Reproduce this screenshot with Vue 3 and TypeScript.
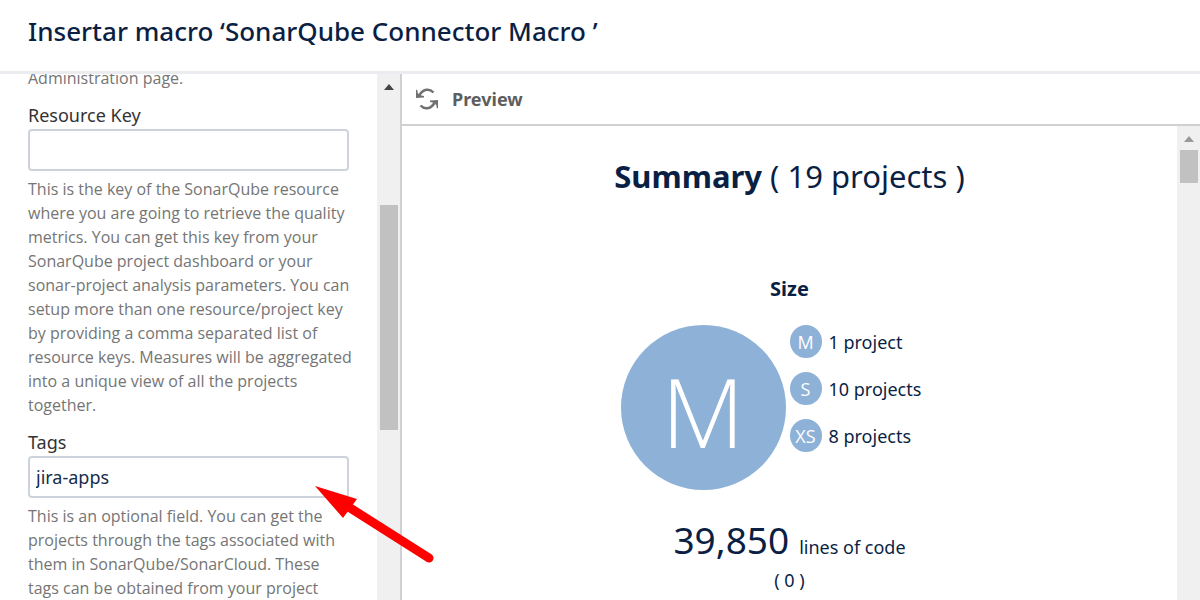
<script setup lang="ts">
import { ref } from 'vue'

interface SizeRow {
  label: string
  text: string
}

const resourceKey = ref('')
const tags = ref('jira-apps')

const resourceHelp: string[] = [
  'This is the key of the SonarQube resource',
  'where you are going to retrieve the quality',
  'metrics. You can get this key from your',
  'SonarQube project dashboard or your',
  'sonar-project analysis parameters. You can',
  'setup more than one resource/project key',
  'by providing a comma separated list of',
  'resource keys. Measures will be aggregated',
  'into a unique view of all the projects',
  'together.',
]

const tagsHelp: string[] = [
  'This is an optional field. You can get the',
  'projects through the tags associated with',
  'them in SonarQube/SonarCloud. These',
  'tags can be obtained from your project',
]

const sizes: SizeRow[] = [
  { label: 'M', text: '1 project' },
  { label: 'S', text: '10 projects' },
  { label: 'XS', text: '8 projects' },
]
</script>

<template>
  <div class="dialog">
    <header class="title-bar">
      <h1>Insertar macro ‘SonarQube Connector Macro ’</h1>
    </header>

    <div class="body">
      <aside class="params">
        <form class="fields" @submit.prevent>
          <p class="help previous">Administration page.</p>

          <div class="field">
            <label for="resource-key">Resource Key</label>
            <input id="resource-key" v-model="resourceKey" type="text" aria-describedby="resource-help" />
            <p id="resource-help" class="help">
              <span v-for="line in resourceHelp" :key="line">{{ line }}</span>
            </p>
          </div>

          <div class="field">
            <label for="tags">Tags</label>
            <input id="tags" v-model="tags" type="text" aria-describedby="tags-help" />
            <p id="tags-help" class="help">
              <span v-for="line in tagsHelp" :key="line">{{ line }}</span>
            </p>
          </div>
        </form>
        <div class="scrollbar" aria-hidden="true">
          <svg class="up" viewBox="0 0 10 6"><path d="M0 6 5 0l5 6z" /></svg>
          <div class="thumb params-thumb"></div>
        </div>
      </aside>

      <main class="preview">
        <div class="toolbar">
          <button type="button" class="refresh">
            <svg viewBox="0 0 22 22" aria-hidden="true">
              <g id="half">
                <path class="arc" d="M17.5 4.500C13.500.300 7.500.500 3.500 7" />
                <path class="head" d="M0 1.500 1.500 2.500V4.500L3 6.500 5.500 7.500 8 8V9.500L0 10z" />
              </g>
              <use href="#half" transform="rotate(180 11 11)" />
            </svg>
            <span>Preview</span>
          </button>
        </div>

        <div class="viewport">
          <section class="report">
            <h2><b>Summary</b> ( 19 projects )</h2>
            <h3>Size</h3>
            <div class="size">
              <div class="rating">M</div>
              <ul>
                <li v-for="row in sizes" :key="row.label">
                  <span class="badge">{{ row.label }}</span>
                  <span>{{ row.text }}</span>
                </li>
              </ul>
            </div>
            <p class="loc"><span class="count">39,850</span><span>lines of code</span></p>
            <p class="delta">( 0 )</p>
          </section>
          <div class="scrollbar light" aria-hidden="true">
            <svg class="up" viewBox="0 0 10 6"><path d="M0 6 5 0l5 6z" /></svg>
            <div class="thumb preview-thumb"></div>
          </div>
        </div>
      </main>
    </div>

    <svg class="pointer" viewBox="0 0 120 80" aria-hidden="true">
      <path d="M0 0 42 13 28 32z" />
      <line x1="32" y1="20" x2="114" y2="72" />
    </svg>
  </div>
</template>

<style>
body {
  margin: 0;
}
</style>

<style scoped>
.dialog {
  position: relative;
  display: flex;
  flex-direction: column;
  height: 100vh;
  overflow: hidden;
  background: #fff;
  color: #0b1f44;
  font-family: "Noto Sans", "Open Sans", sans-serif;
  font-size: 18px;
}

h1, h2, h3, p, ul {
  margin: 0;
  padding: 0;
  font-weight: 400;
}

.title-bar {
  flex: none;
  padding: 11px 28px 20px;
  border-bottom: 3px solid #ebecf0;
  white-space: nowrap;
}

h1 {
  font-size: 26px;
  line-height: 40px;
  font-weight: 500;
}

.body {
  display: flex;
  flex: 1;
  min-height: 0;
}

.params {
  display: flex;
  justify-content: space-between;
  flex: 0 0 400px;
  overflow: hidden;
  border-right: 2px solid #d0d0d2;
}

.fields {
  display: flex;
  flex-direction: column;
  gap: 12px;
  flex: 1;
  min-width: 0;
  margin-top: -8px;
  padding: 0 28px;
  white-space: nowrap;
}

.field {
  display: flex;
  flex-direction: column;
}

label {
  color: #333;
  line-height: 27px;
}

input {
  box-sizing: border-box;
  width: 100%;
  height: 42px;
  margin-bottom: 6px;
  padding: 0 6px;
  border: 2px solid #cdd2dd;
  border-radius: 4px;
  background: #fff;
  color: #172b4d;
  font: inherit;
  outline: 0;
}

.help {
  color: #757575;
  font-family: "Open Sans", sans-serif;
  font-size: 16px;
  line-height: 24px;
}

.help span {
  display: block;
}

.scrollbar {
  display: flex;
  flex-direction: column;
  align-items: center;
  flex: 0 0 23px;
  background: #f0f0f0;
}

.up {
  width: 10px;
  height: 6px;
  margin-top: 10px;
  fill: #444;
}

.thumb {
  width: 18px;
  background: #c1c1c1;
}

.params-thumb {
  height: 225px;
  margin-top: 115px;
}

.preview {
  display: flex;
  flex-direction: column;
  flex: 1;
  min-width: 0;
}

.toolbar {
  padding: 10px 14px;
  border-bottom: 2px solid #d0d0d0;
}

.refresh {
  display: flex;
  align-items: center;
  gap: 14px;
  padding: 0;
  border: 0;
  background: none;
  color: #5e5e5e;
  font: inherit;
  font-weight: 700;
  line-height: 30px;
}

.refresh svg {
  width: 22px;
  height: 22px;
  fill: #707070;
}

.arc {
  fill: none;
  stroke: #707070;
  stroke-width: 2.5;
}

.viewport {
  display: flex;
  flex: 1;
  min-height: 0;
}

.report {
  display: flex;
  flex-direction: column;
  align-items: center;
  flex: 1;
  white-space: nowrap;
}

.light .up {
  fill: #999;
}

.preview-thumb {
  height: 33px;
  margin-top: 8px;
}

h2 {
  margin-top: 26px;
  font-size: 31px;
  line-height: 48px;
}

h3 {
  margin-top: 77px;
  font-size: 20px;
  line-height: 24px;
  font-weight: 700;
}

.size {
  display: flex;
  gap: 4px;
  margin-top: 24px;
}

.rating,
.badge {
  display: flex;
  align-items: center;
  justify-content: center;
  box-sizing: border-box;
  border-radius: 50%;
  background: #8eb1d7;
  color: #fff;
  font-family: "Open Sans", sans-serif;
}

.rating {
  width: 165px;
  height: 165px;
  padding-top: 6px;
  font-size: 96px;
  font-weight: 300;
}

ul {
  width: 169px;
  list-style: none;
}

li {
  display: flex;
  align-items: center;
  gap: 7px;
  height: 33px;
  margin-bottom: 14px;
}

.badge {
  width: 32px;
  height: 33px;
}

.loc {
  display: flex;
  align-items: baseline;
  gap: 10px;
  margin-top: 30px;
  line-height: 40px;
}

.count {
  font-size: 37px;
}

.delta {
  line-height: 26px;
}

.pointer {
  position: absolute;
  left: 315px;
  top: 486px;
  width: 120px;
  height: 80px;
  fill: #fe0000;
  stroke: none;
}

.pointer line {
  stroke: #fe0000;
  stroke-width: 9;
  stroke-linecap: round;
}
</style>
